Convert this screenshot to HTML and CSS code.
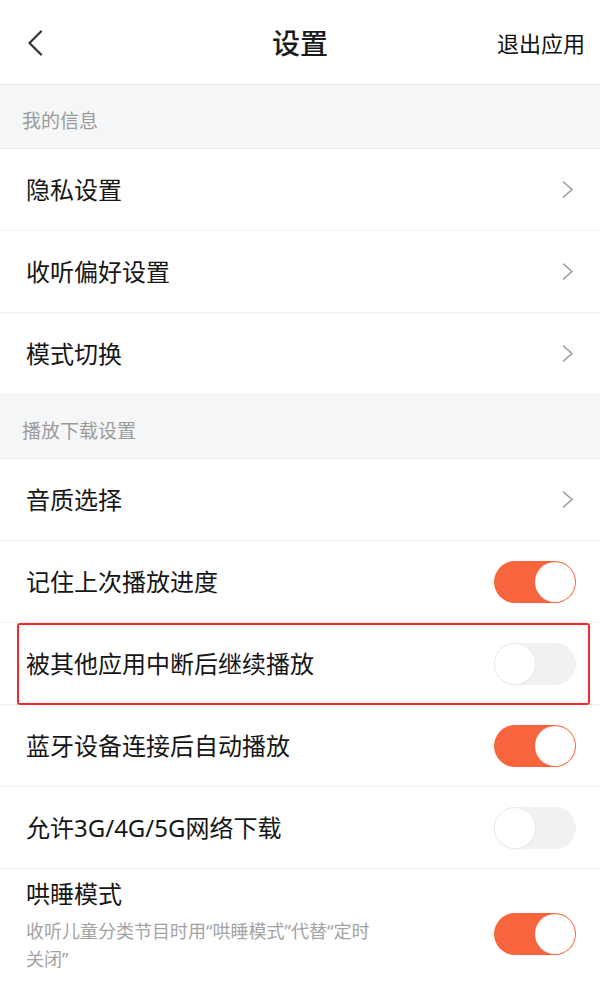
FILE: index.html
```html
<!DOCTYPE html>
<html lang="zh-CN">
<head>
<meta charset="utf-8">
<title>设置</title>
<link rel="stylesheet" href="styles.css">
</head>
<body>
<div class="page">
  <header class="topbar">
    <span class="back">
      <svg width="16" height="26" viewBox="0 0 16 26"><path d="M14 1.5 L2.5 13 L14 24.5" fill="none" stroke="#333" stroke-width="2.2" stroke-linecap="round" stroke-linejoin="round"/></svg>
    </span>
    <h1 class="title">设置</h1>
    <span class="exit">退出应用</span>
  </header>

  <div class="section">我的信息</div>
  <div class="row"><span class="label">隐私设置</span><span class="arrow"><svg width="12" height="17" viewBox="0 0 12 17"><path d="M1.5 1 L10 8.5 L1.5 16" fill="none" stroke="#9a9a9a" stroke-width="1.6" stroke-linejoin="round" stroke-linecap="round"/></svg></span></div>
  <div class="row"><span class="label">收听偏好设置</span><span class="arrow"><svg width="12" height="17" viewBox="0 0 12 17"><path d="M1.5 1 L10 8.5 L1.5 16" fill="none" stroke="#9a9a9a" stroke-width="1.6" stroke-linejoin="round" stroke-linecap="round"/></svg></span></div>
  <div class="row"><span class="label">模式切换</span><span class="arrow"><svg width="12" height="17" viewBox="0 0 12 17"><path d="M1.5 1 L10 8.5 L1.5 16" fill="none" stroke="#9a9a9a" stroke-width="1.6" stroke-linejoin="round" stroke-linecap="round"/></svg></span></div>

  <div class="section">播放下载设置</div>
  <div class="row"><span class="label">音质选择</span><span class="arrow"><svg width="12" height="17" viewBox="0 0 12 17"><path d="M1.5 1 L10 8.5 L1.5 16" fill="none" stroke="#9a9a9a" stroke-width="1.6" stroke-linejoin="round" stroke-linecap="round"/></svg></span></div>
  <div class="row"><span class="label">记住上次播放进度</span><span class="switch on"><span class="knob"></span></span></div>
  <div class="row highlighted"><span class="label">被其他应用中断后继续播放</span><span class="switch"><span class="knob"></span></span><span class="mark"></span></div>
  <div class="row"><span class="label">蓝牙设备连接后自动播放</span><span class="switch on"><span class="knob"></span></span></div>
  <div class="row"><span class="label">允许3G/4G/5G网络下载</span><span class="switch"><span class="knob"></span></span></div>
  <div class="row tall">
    <div class="text">
      <div class="label">哄睡模式</div>
      <div class="desc">收听儿童分类节目时用“哄睡模式”代替“定时关闭”</div>
    </div>
    <span class="switch on"><span class="knob"></span></span>
  </div>
</div>
</body>
</html>
```

FILE: styles.css
```css
* { box-sizing: border-box; }
html, body { margin: 0; padding: 0; background: #fff; }
body {
  font-family: "Noto Sans", "Noto Sans CJK SC", sans-serif;
  color: #1a1a1a;
}
.page { width: 600px; overflow: hidden; }

.topbar {
  height: 85px;
  border-bottom: 1px solid #e6e6e6;
  display: flex;
  align-items: center;
  justify-content: space-between;
  padding: 2px 15px 0 27px;
  position: relative;
}
.back { display: flex; width: 16px; height: 26px; }
.title {
  margin: 0;
  position: absolute;
  left: 0; right: 0;
  text-align: center;
  font-size: 28px;
  font-weight: 500;
  line-height: 40px;
  pointer-events: none;
}
.exit { font-size: 22px; line-height: 30px; color: #111; }

.section {
  height: 64px;
  background: #f5f6f7;
  border-bottom: 1px solid #ececec;
  display: flex;
  align-items: center;
  padding: 6px 0 0 22px;
  font-size: 19px;
  color: #9b9b9b;
}

.row {
  height: 82px;
  border-bottom: 1px solid #efefef;
  display: flex;
  align-items: center;
  justify-content: space-between;
  padding: 0 24px 0 26px;
  position: relative;
}
.label { font-size: 24px; line-height: 34px; color: #161616; }
.arrow { display: flex; margin-right: 2px; }

.switch {
  width: 82px;
  height: 42px;
  border-radius: 21px;
  background: #f1f1f1;
  position: relative;
  flex: none;
}
.switch .knob {
  position: absolute;
  top: 1px; left: 1px;
  width: 40px; height: 40px;
  border-radius: 50%;
  background: #fff;
  box-shadow: 0 0 0 1px #ebebeb, 0 1px 2px rgba(0,0,0,0.06);
}
.switch.on { background: #f7653f; }
.switch.on .knob { left: 41px; box-shadow: none; }

.mark {
  position: absolute;
  left: 17px; right: 10px;
  top: 0; bottom: -1px;
  border: 2px solid #f52a2a;
  border-radius: 3px;
}

.row.tall {
  height: auto;
  min-height: 122px;
  border-bottom: none;
  align-items: flex-start;
  padding-top: 10px;
  padding-bottom: 16px;
}
.row.tall .label { line-height: 30px; }
.row.tall .text { width: 356px; }
.desc {
  margin-top: 8px;
  font-size: 18px;
  line-height: 28px;
  color: #a3a3a3;
}
.row.tall .switch { margin-top: 34px; }
```
